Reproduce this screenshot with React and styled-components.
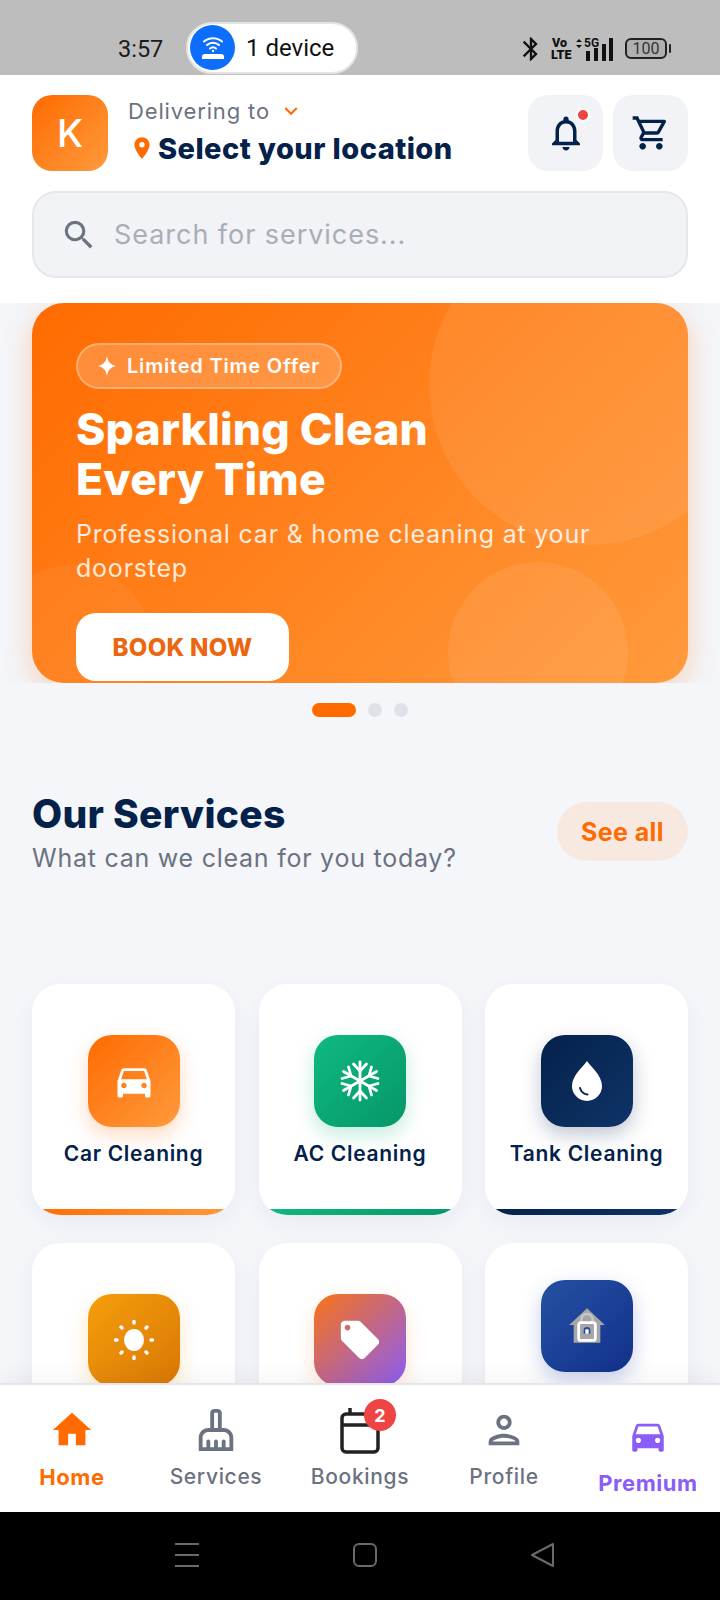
import React from "react";
import styled, { createGlobalStyle } from "styled-components";
import {
  MdBluetooth, MdDirectionsCar, MdLocalOffer, MdHome, MdOutlineCleaningServices,
  MdOutlinePerson, MdOutlineNotifications, MdOutlineShoppingCart, MdSearch, MdLocationOn, MdKeyboardArrowDown,
} from "react-icons/md";

const UI = `"Inter", "Noto Sans", sans-serif`;

const Global = createGlobalStyle`
  html, body { margin: 0; padding: 0; background: #f4f6fa; }
  * { box-sizing: border-box; }
`;
const Phone = styled.div`
  width: 720px; height: 1600px; display: flex; flex-direction: column; overflow: hidden;
  font-family: ${UI}; background: #f4f6fa;
`;
const StatusBar = styled.div`
  height: 75px; flex: none; background: #bdbdbd; display: flex; align-items: center;
  padding: 22px 53px 0 118px; color: #1c1c1c; font-family: "Roboto", sans-serif; position: relative;
`;
const Clock = styled.span` font-size: 23.500px; width: 68px; `;
const DevicePill = styled.div`
  width: 172px; height: 52px; margin-top: -2px; border-radius: 26px; background: #fff; border: 2px solid #e4e4e4;
  display: flex; align-items: center; gap: 11px; padding-left: 2px; font-size: 24px; font-weight: 400; color: #111;
`;
const WifiDot = styled.div`
  width: 45px; height: 45px; border-radius: 50%; background: #0d6efd; display: flex; align-items: center; justify-content: center;
`;
const StatusRight = styled.div`
  margin-left: auto; display: flex; align-items: center; color: #111;
`;
const VoLte = styled.div`
  font-size: 12.5px; font-weight: 900; line-height: 12px; text-align: center; margin: 0 8px 0 6px; width: 17px; font-family: "Roboto", sans-serif;
`;
const Battery = styled.div`
  width: 42px; height: 21px; border: 2px solid #222; border-radius: 6px; margin-left: 9px; font-size: 16px; color: #333;
  display: flex; align-items: center; justify-content: center; position: relative; background: #b0b0b0; font-family: "Roboto", sans-serif;
  &::after { content: ""; position: absolute; right: -6px; top: 4px; width: 2px; height: 9px; background: #222; border-radius: 1px; }
`;

const Header = styled.header`
  flex: none; background: #fff; padding: 20px 32px 25px; display: flex; flex-direction: column; gap: 20px;
`;
const TopRow = styled.div` display: flex; align-items: center; height: 76px; `;
const Avatar = styled.div`
  width: 76px; height: 76px; border-radius: 20px; color: #fff; font-size: 38px; font-weight: 500;
  background: linear-gradient(135deg, #ff6b00, #ff9a3d); display: flex; align-items: center; justify-content: center;
`;
const LocationBlock = styled.div` margin-left: 20px; flex: 1; display: flex; flex-direction: column; margin-top: -6px; `;
const DeliverRow = styled.div`
  display: flex; align-items: center; gap: 8px; color: #6b7280; font-size: 22px; height: 36px; letter-spacing: .85px;
`;
const LocationRow = styled.div`
  display: flex; align-items: center; gap: 3px; font-size: 29px; font-weight: 800; color: #04214a; height: 38px; margin-left: 1px; letter-spacing: .45px;
`;
const SquareBtn = styled.div`
  width: 75px; height: 76px; border-radius: 20px; background: #f1f3f6; margin-left: ${p => p.$gap || 0}px; color: #04214a;
  display: flex; align-items: center; justify-content: center; position: relative;
`;
const RedDot = styled.span`
  position: absolute; top: 13px; right: 13px; width: 14px; height: 14px; border-radius: 50%; background: #ef4444; border: 2px solid #fff;
`;
const SearchBox = styled.div`
  height: 87px; border-radius: 24px; background: #f1f3f6; border: 2px solid #e5e7eb; display: flex; align-items: center; gap: 16px;
  padding-left: 26px; color: #a8aeb7; font-size: 27px; letter-spacing: .95px;
`;
const Body = styled.main` flex: 1; min-height: 0; overflow: hidden; display: flex; flex-direction: column; `;
const Carousel = styled.div` height: 380px; flex: none; overflow: hidden; padding: 0 32px; `;
const Banner = styled.section`
  height: 380px; border-radius: 32px; position: relative; overflow: hidden; color: #fff; padding: 40px 44px 0;
  background: linear-gradient(135deg, #ff6b00, #ff9a3d);
`;
const BannerShadow = styled.div` border-radius: 32px; box-shadow: 0 8px 30px rgba(255,107,0,.28); `;
const Circle = styled.span`
  position: absolute; border-radius: 50%; background: rgba(255,255,255,${p => p.$alpha || 0.08});
  width: ${p => p.$d}px; height: ${p => p.$d}px; left: ${p => p.$l}px; top: ${p => p.$t}px;
`;
const Chip = styled.div`
  position: relative; width: 266px; height: 46px; border-radius: 23px; background: rgba(255,255,255,.2); border: 2px solid rgba(255,255,255,.3);
  display: flex; align-items: center; gap: 11px; padding-left: 20px; font-size: 20px; font-weight: 600; letter-spacing: .8px; white-space: nowrap;
`;
const BannerTitle = styled.h1`
  position: relative; margin: 15px 0 0; font-size: 44.5px; line-height: 50px; font-weight: 800; letter-spacing: .2px;
`;
const BannerSub = styled.p`
  position: relative; margin: 13px 0 0; width: 540px; font-size: 25px; line-height: 34px; font-weight: 400; color: rgba(255,255,255,.85); letter-spacing: .78px;
`;
const BookBtn = styled.div`
  position: relative; margin-top: 28px; width: 213px; height: 68px; border-radius: 20px; background: #fff; color: #ea670f; font-size: 24px; font-weight: 800; letter-spacing: .3px;
  display: flex; align-items: center; justify-content: center;
`;
const Dots = styled.div` display: flex; justify-content: center; align-items: center; gap: 12px; margin-top: 20px; height: 14px; `;
const Dot = styled.span`
  height: 14px; width: ${p => (p.$active ? 44 : 14)}px; border-radius: 7px; background: ${p => (p.$active ? "#ff6b00" : "#dfe2e8")};
`;
const SectionHead = styled.div` display: flex; justify-content: space-between; align-items: flex-start; padding: 0 32px; margin-top: 74px; `;
const SectionTitle = styled.h2` margin: 0; color: #04214a; font-size: 39px; line-height: 46px; font-weight: 800; letter-spacing: .3px; `;
const SectionSub = styled.p` margin: 5px 0 0; color: #6b7280; font-size: 25px; line-height: 33px; letter-spacing: .75px; `;
const SeeAll = styled.div`
  width: 131px; height: 59px; margin-top: 11px; border-radius: 30px; background: #f8e9e0; color: #ff6b00; font-size: 25px; font-weight: 700; letter-spacing: .4px;
  display: flex; align-items: center; justify-content: center;
`;
const Grid = styled.div`
  display: grid; grid-template-columns: repeat(3, 203px); column-gap: 23.5px; row-gap: 28px; padding: 0 32px; margin-top: 109px;
`;
const Card = styled.div`
  height: 231px; border-radius: 28px; background: #fff; position: relative; overflow: hidden; display: flex; flex-direction: column; align-items: center;
  padding-top: ${p => p.$top || 51}px;
`;
const CardWrap = styled.div` border-radius: 28px; box-shadow: 0 8px 24px rgba(20,40,80,.05); `;
const IconTile = styled.div`
  width: 92px; height: 92px; border-radius: 24px; flex: none; display: flex; align-items: center; justify-content: center; color: #fff;
  background: ${p => p.$bg}; box-shadow: 0 8px 20px ${p => p.$glow};
`;
const CardLabel = styled.div` margin-top: 14px; color: #04214a; font-size: 21px; line-height: 26px; font-weight: 600; letter-spacing: .7px; white-space: nowrap; `;
const AccentBar = styled.span` position: absolute; left: 0; right: 0; bottom: 0; height: 6px; background: ${p => p.$bg}; `;
const Nav = styled.nav`
  flex: none; height: 129px; margin-top: -1px; border-top: 2px solid #e3e5e8; background: #fff; display: grid; grid-template-columns: repeat(5, 144px);
  position: relative; z-index: 2; box-shadow: 0 -8px 20px rgba(0,0,0,.04);
`;
const NavItem = styled.div`
  display: flex; flex-direction: column; align-items: center; position: relative; color: ${p => p.$color || "#6b7280"};
  padding-top: ${p => p.$top || 20}px;
`;
const NavIcon = styled.div` height: 50px; display: flex; align-items: center; justify-content: center; `;
const NavLabel = styled.span`
  margin-top: 8px; font-size: ${p => p.$bold ? 22 : 21}px; line-height: 28px; letter-spacing: ${p => p.$bold ? .55 : .65}px; font-weight: ${p => p.$bold ? 700 : 500};
`;
const Badge = styled.span`
  position: absolute; top: 14px; left: 76px; width: 32px; height: 32px; border-radius: 50%; background: #ef4444; color: #fff; font-size: 18px; font-weight: 700;
  display: flex; align-items: center; justify-content: center;
`;
const SystemBar = styled.div`
  flex: none; height: 88px; background: #000; display: grid; grid-template-columns: 24px 24px 24px; justify-content: center; column-gap: 154px; align-items: center; padding: 0 0 2px 10px;
`;

const WifiRouter = () => (
  <svg width="30" height="30" viewBox="0 0 30 30" fill="none" stroke="#fff" strokeLinecap="round">
    <path d="M6 8.500c5-4.500 13-4.500 18 0M9 12c3.300-3 8.700-3 12 0M12 15.500c1.800-1.500 4.200-1.500 6 0" strokeWidth="2" />
    <circle cx="15" cy="18" r="1.200" fill="#fff" stroke="none" />
    <path d="M7 21h16a3 3 0 0 1 3 3v2H4v-2a3 3 0 0 1 3-3z" fill="#fff" stroke="none" />
  </svg>
);
const Signal = () => (
  <svg width="40" height="28" viewBox="0 0 40 28" fill="#111">
    <path d="M0 7l3-3 3 3zM0 10l3 3 3-3z" />
    <text x="8" y="12" fontSize="12" fontWeight="700" fontFamily="Roboto, sans-serif">5G</text>
    <rect x="10" y="16" width="4" height="10" /><rect x="18" y="13" width="4" height="13" /><rect x="26" y="9" width="4" height="17" /><rect x="33" y="3" width="4" height="23" />
  </svg>
);
const Sparkle = () => (
  <svg width="18" height="20" viewBox="0 0 18 20" fill="#fff"><path d="M9 0c1 6 3.500 8.500 9 10-5.500 1.500-8 4-9 10-1-6-3.500-8.500-9-10 5.500-1.500 8-4 9-10z" /></svg>
);
const Snowflake = () => (
  <svg width="40" height="42" viewBox="0 0 40 42" fill="none" stroke="#fff" strokeWidth="2.800" strokeLinecap="round" strokeLinejoin="round">
    <path d="M20 2v38M3.500 11.500l33 19M3.500 30.500l33-19" />
    <path d="M13.500 4l6.500 7 6.500-7M13.500 38l6.500-7 6.500 7" />
    <path d="M2 18.500l9-2.500-2.500-9M38 23.500l-9 2.500 2.500 9M2 23.500l9 2.500-2.500 9M38 18.500l-9-2.500 2.500-9" />
  </svg>
);
const Drop = () => (
  <svg width="32" height="42" viewBox="0 0 32 42">
    <path d="M16 1c3 5 15 14 15 25a15 15 0 0 1-30 0C1 15 13 6 16 1z" fill="#fff" />
    <path d="M9 28c1 3.500 3.500 6 7.500 6.500" stroke="#0a2a58" strokeWidth="2" fill="none" strokeLinecap="round" />
  </svg>
);
const Sun = () => (
  <svg width="42" height="42" viewBox="0 0 42 42" fill="#fff" stroke="#fff">
    <ellipse cx="21" cy="21" rx="10" ry="11" stroke="none" />
    <g strokeWidth="3.500" strokeLinecap="round">
      <path d="M21 2.500v1.500M21 38v1.500M2.500 21H4M38 21h1.500M8 8l1 1M33 33l1 1M8 34l1-1M33 9l1-1" />
    </g>
  </svg>
);
const HouseLock = () => (
  <svg width="40" height="40" viewBox="0 0 36 36">
    <path d="M18 2L2 17h4v16h24V17h4z" fill="#a6a6a8" />
    <path d="M13 15v-3a5 5 0 0 1 10 0v3" fill="none" stroke="#c8c8ca" strokeWidth="2" />
    <rect x="10.500" y="15" width="15" height="16" rx="2" fill="none" stroke="#fff" strokeWidth="2.500" />
    <path d="M15 22a3 3 0 0 1 6 0v3h-6z" fill="#1f4aa0" />
    <rect x="16.500" y="21" width="3" height="4" fill="#fff" />
  </svg>
);
const Calendar = () => (
  <svg width="48" height="50" viewBox="0 0 48 50" fill="none" stroke="#222" strokeWidth="3.500">
    <rect x="6" y="9" width="36" height="38" rx="4" />
    <path d="M6 20h36M14 3v7" />
  </svg>
);
const Menu = () => (
  <svg width="24" height="24" viewBox="0 0 24 24" stroke="#6a6a6a" strokeWidth="2"><path d="M0 1h24M0 12h24M0 23h24" /></svg>
);
const SquareKey = () => (
  <svg width="24" height="24" viewBox="0 0 24 24" fill="none" stroke="#6a6a6a" strokeWidth="2"><rect x="1" y="1" width="22" height="22" rx="5" /></svg>
);
const BackKey = () => (
  <svg width="24" height="24" viewBox="0 0 24 24" fill="none" stroke="#6a6a6a" strokeWidth="2" strokeLinejoin="round"><path d="M22 1v22L1 12z" /></svg>
);

const services = [
  { label: "Car Cleaning", bg: "linear-gradient(135deg,#ff6b00,#ff9a3d)", glow: "rgba(255,107,0,.25)", icon: <MdDirectionsCar size={44} /> },
  { label: "AC Cleaning", bg: "linear-gradient(135deg,#10b981,#059669)", glow: "rgba(16,185,129,.25)", icon: <Snowflake /> },
  { label: "Tank Cleaning", bg: "linear-gradient(135deg,#04214a,#0f3468)", glow: "rgba(4,33,74,.25)", icon: <Drop /> },
  { bg: "linear-gradient(135deg,#f59e0b,#d97706)", glow: "rgba(245,158,11,.25)", icon: <Sun /> },
  { bg: "linear-gradient(135deg,#f97316,#8b5cf6)", glow: "rgba(249,115,22,.2)", icon: <MdLocalOffer size={46} /> },
  { bg: "linear-gradient(135deg,#2552a3,#12308a)", glow: "rgba(30,64,175,.25)", icon: <HouseLock />, top: 37 },
];

export default function App() {
  return (
    <Phone>
      <Global />
      <StatusBar>
        <Clock>3:57</Clock>
        <DevicePill><WifiDot><WifiRouter /></WifiDot>1 device</DevicePill>
        <StatusRight>
          <MdBluetooth size={28} />
          <VoLte>Vo<br />LTE</VoLte>
          <Signal />
          <Battery>100</Battery>
        </StatusRight>
      </StatusBar>
      <Header>
        <TopRow>
          <Avatar>K</Avatar>
          <LocationBlock>
            <DeliverRow>Delivering to <MdKeyboardArrowDown size={26} color="#ff6b00" /></DeliverRow>
            <LocationRow><MdLocationOn size={26} color="#ff6b00" />Select your location</LocationRow>
          </LocationBlock>
          <SquareBtn><MdOutlineNotifications size={42} /><RedDot /></SquareBtn>
          <SquareBtn $gap={10}><MdOutlineShoppingCart size={40} /></SquareBtn>
        </TopRow>
        <SearchBox><MdSearch size={38} color="#6b7280" />Search for services...</SearchBox>
      </Header>
      <Body>
        <Carousel>
          <BannerShadow>
            <Banner>
              <Circle $d={320} $l={397} $t={-78} />
              <Circle $d={180} $l={416} $t={259} />
              <Circle $d={160} $l={-40} $t={262} $alpha={0.05} />
              <Chip><Sparkle />Limited Time Offer</Chip>
              <BannerTitle>Sparkling Clean<br />Every Time</BannerTitle>
              <BannerSub>Professional car &amp; home cleaning at your doorstep</BannerSub>
              <BookBtn>BOOK NOW</BookBtn>
            </Banner>
          </BannerShadow>
        </Carousel>
        <Dots><Dot $active /><Dot /><Dot /></Dots>
        <SectionHead>
          <div>
            <SectionTitle>Our Services</SectionTitle>
            <SectionSub>What can we clean for you today?</SectionSub>
          </div>
          <SeeAll>See all</SeeAll>
        </SectionHead>
        <Grid>
          {services.map((s, i) => (
            <CardWrap key={i}>
              <Card $top={s.top}>
                <IconTile $bg={s.bg} $glow={s.glow}>{s.icon}</IconTile>
                {s.label && <CardLabel>{s.label}</CardLabel>}
                {s.label && <AccentBar $bg={s.bg} />}
              </Card>
            </CardWrap>
          ))}
        </Grid>
      </Body>
      <Nav>
        <NavItem $color="#ff6b00"><NavIcon><MdHome size={46} /></NavIcon><NavLabel $bold>Home</NavLabel></NavItem>
        <NavItem><NavIcon><MdOutlineCleaningServices size={46} /></NavIcon><NavLabel>Services</NavLabel></NavItem>
        <NavItem><NavIcon><Calendar /></NavIcon><NavLabel>Bookings</NavLabel><Badge>2</Badge></NavItem>
        <NavItem><NavIcon><MdOutlinePerson size={46} /></NavIcon><NavLabel>Profile</NavLabel></NavItem>
        <NavItem $color="#8b5cf6" $top={26}><NavIcon><MdDirectionsCar size={42} /></NavIcon><NavLabel $bold>Premium</NavLabel></NavItem>
      </Nav>
      <SystemBar><Menu /><SquareKey /><BackKey /></SystemBar>
    </Phone>
  );
}
